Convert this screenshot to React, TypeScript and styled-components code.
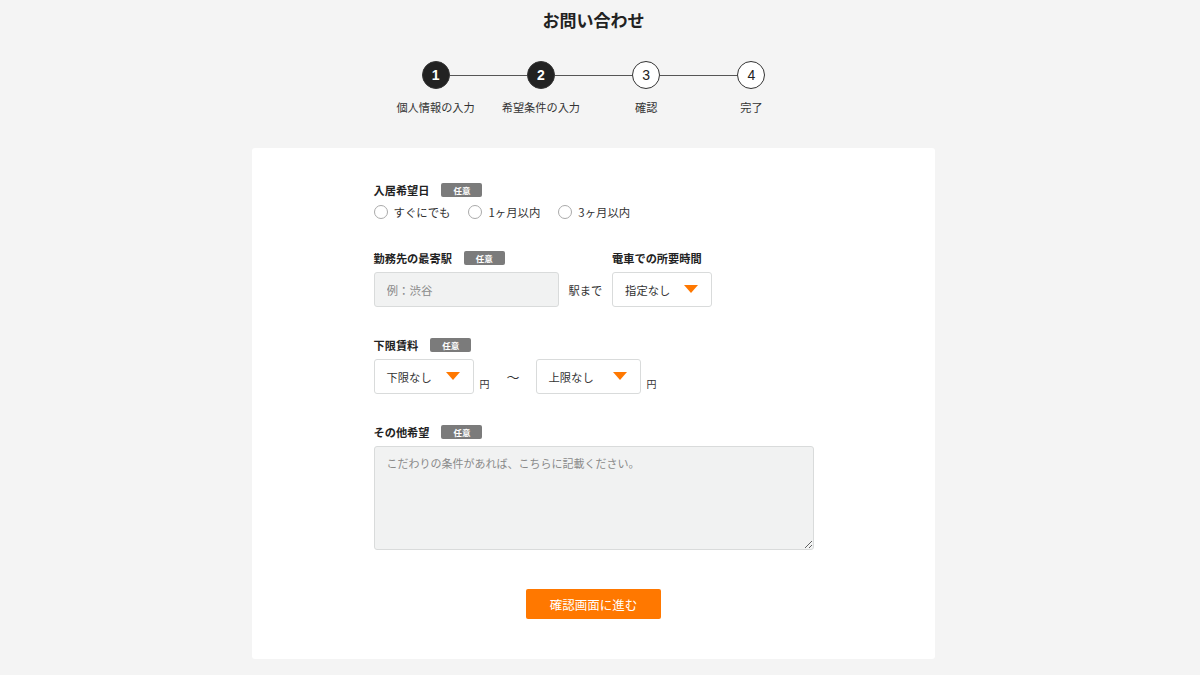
import React, { useState } from 'react';
import styled, { createGlobalStyle } from 'styled-components';

const GlobalStyle = createGlobalStyle`
  body {
    margin: 0;
    background: #f4f4f4;
    font-family: "Noto Sans CJK JP", "Noto Sans", sans-serif;
    color: #222;
  }
  * { box-sizing: border-box; }
`;

const Page = styled.div`
  padding: 10px 13px 16px 0;
  display: flex;
  flex-direction: column;
  align-items: center;
`;

const Title = styled.h1`
  margin: 0;
  font-size: 17px;
  line-height: 20px;
  font-weight: 700;
  color: #222;
`;

const Stepper = styled.ol`
  list-style: none;
  margin: 31px 0 0;
  padding: 0;
  display: grid;
  grid-template-columns: repeat(4, 105.3px);
`;

const Step = styled.li`
  position: relative;
  display: flex;
  flex-direction: column;
  align-items: center;
  &:not(:last-child)::after {
    content: "";
    position: absolute;
    top: 14px;
    left: calc(50% + 14px);
    width: calc(100% - 28px);
    height: 1px;
    background: #555;
  }
`;

const Circle = styled.span<{ $done?: boolean }>`
  width: 28px;
  height: 28px;
  border-radius: 50%;
  border: 1px solid #333;
  background: ${p => (p.$done ? '#222' : '#fff')};
  color: ${p => (p.$done ? '#fff' : '#222')};
  font-family: "Liberation Sans", Arial, sans-serif;
  font-weight: ${p => (p.$done ? 700 : 400)};
  font-size: 14px;
  display: flex;
  align-items: center;
  justify-content: center;
`;

const StepLabel = styled.span`
  margin-top: 11px;
  font-size: 11.2px;
  line-height: 14px;
  color: #333;
  white-space: nowrap;
`;

const Card = styled.form`
  margin-top: 34px;
  width: 683px;
  background: #fff;
  border-radius: 3px;
  padding: 35px 0 40px;
  display: flex;
  flex-direction: column;
  align-items: center;
`;

const Fields = styled.div`
  width: 440px;
  display: flex;
  flex-direction: column;
  gap: 31px;
`;

const Group = styled.div`
  display: flex;
  flex-direction: column;
`;

const LabelRow = styled.div`
  display: flex;
  align-items: center;
  height: 14px;
  margin-bottom: 7px;
`;

const Label = styled.span`
  font-size: 11.2px;
  font-weight: 700;
  color: #222;
  white-space: nowrap;
`;

const Badge = styled.span`
  margin-left: 12px;
  width: 41px;
  height: 14px;
  border-radius: 2px;
  background: #7b7b7b;
  color: #fff;
  font-size: 8.5px;
  font-weight: 700;
  display: flex;
  align-items: center;
  justify-content: center;
`;

const RadioList = styled.div`
  display: flex;
  gap: 18px;
`;

const RadioItem = styled.label`
  display: flex;
  align-items: center;
  gap: 6px;
  font-size: 11.4px;
  color: #333;
  cursor: pointer;
`;

const RadioDot = styled.span<{ $on?: boolean }>`
  width: 14px;
  height: 14px;
  border-radius: 50%;
  border: 1px solid #aaa;
  background: #fff;
  box-shadow: ${p => (p.$on ? 'inset 0 0 0 3px #fff, inset 0 0 0 7px #ff7800' : 'none')};
`;

const Row = styled.div`
  display: flex;
  align-items: flex-end;
`;

const TextInput = styled.input`
  width: 185px;
  height: 35px;
  border: 1px solid #d9dbdb;
  border-radius: 3px;
  background: #f1f2f2;
  padding: 0 12px;
  font-family: inherit;
  font-size: 11.5px;
  color: #222;
  outline: none;
  &::placeholder { color: #8a8a8a; }
`;

const Suffix = styled.span`
  height: 35px;
  display: flex;
  align-items: center;
  margin: 0 10px;
  font-size: 11.2px;
  color: #333;
`;

const Yen = styled.span`
  margin-left: 6px;
  padding-bottom: 3px;
  font-size: 10px;
  color: #333;
`;

const Tilde = styled.span`
  height: 35px;
  display: flex;
  align-items: center;
  margin: 0 16px 0 17px;
  font-size: 13px;
  color: #333;
`;

const SelectBox = styled.div<{ $w: number }>`
  width: ${p => p.$w}px;
  height: 35px;
  border: 1px solid #d9dbdb;
  border-radius: 3px;
  background: #fff;
  padding: 0 13px 0 12px;
  display: flex;
  align-items: center;
  justify-content: space-between;
  font-size: 11.3px;
  color: #333;
  cursor: pointer;
`;

const Caret = styled.span`
  width: 0;
  height: 0;
  border-left: 7.5px solid transparent;
  border-right: 7.5px solid transparent;
  border-top: 8px solid #ff7800;
  margin-top: -2px;
`;

const TextArea = styled.textarea`
  width: 440px;
  height: 104px;
  border: 1px solid #d9dbdb;
  border-radius: 3px;
  background: #f1f2f2;
  padding: 8px 12px;
  font-family: inherit;
  font-size: 11px;
  line-height: 16px;
  color: #222;
  outline: none;
  &::placeholder { color: #8a8a8a; }
`;

const Submit = styled.button`
  margin-top: 39px;
  width: 135px;
  height: 30px;
  border: none;
  border-radius: 2px;
  background: #ff7800;
  color: #fff;
  font-family: inherit;
  font-size: 12.5px;
  cursor: pointer;
  &:hover { opacity: 0.85; }
`;

const steps = ['個人情報の入力', '希望条件の入力', '確認', '完了'];
const moves = ['すぐにでも', '1ヶ月以内', '3ヶ月以内'];

function Select({ w, children }: { w: number; children: React.ReactNode }) {
  return (
    <SelectBox $w={w}>
      <span>{children}</span>
      <Caret />
    </SelectBox>
  );
}

export default function App() {
  const [move, setMove] = useState<string | null>(null);
  const [station, setStation] = useState('');
  const [note, setNote] = useState('');

  return (
    <Page>
      <GlobalStyle />
      <Title>お問い合わせ</Title>
      <Stepper>
        {steps.map((s, i) => (
          <Step key={s}>
            <Circle $done={i < 2}>{i + 1}</Circle>
            <StepLabel>{s}</StepLabel>
          </Step>
        ))}
      </Stepper>

      <Card onSubmit={e => e.preventDefault()}>
        <Fields>
          <Group>
            <LabelRow>
              <Label>入居希望日</Label>
              <Badge>任意</Badge>
            </LabelRow>
            <RadioList>
              {moves.map(m => (
                <RadioItem key={m} onClick={() => setMove(m)}>
                  <RadioDot $on={move === m} />
                  {m}
                </RadioItem>
              ))}
            </RadioList>
          </Group>

          <Row>
            <Group>
              <LabelRow>
                <Label>勤務先の最寄駅</Label>
                <Badge>任意</Badge>
              </LabelRow>
              <TextInput
                value={station}
                onChange={e => setStation(e.target.value)}
                placeholder="例：渋谷"
              />
            </Group>
            <Suffix>駅まで</Suffix>
            <Group>
              <LabelRow>
                <Label>電車での所要時間</Label>
              </LabelRow>
              <Select w={100}>指定なし</Select>
            </Group>
          </Row>

          <Group>
            <LabelRow>
              <Label>下限賃料</Label>
              <Badge>任意</Badge>
            </LabelRow>
            <Row>
              <Select w={100}>下限なし</Select>
              <Yen>円</Yen>
              <Tilde>〜</Tilde>
              <Select w={105}>上限なし</Select>
              <Yen>円</Yen>
            </Row>
          </Group>

          <Group>
            <LabelRow>
              <Label>その他希望</Label>
              <Badge>任意</Badge>
            </LabelRow>
            <TextArea
              value={note}
              onChange={e => setNote(e.target.value)}
              placeholder="こだわりの条件があれば、こちらに記載ください。"
            />
          </Group>
        </Fields>
        <Submit type="submit">確認画面に進む</Submit>
      </Card>
    </Page>
  );
}
